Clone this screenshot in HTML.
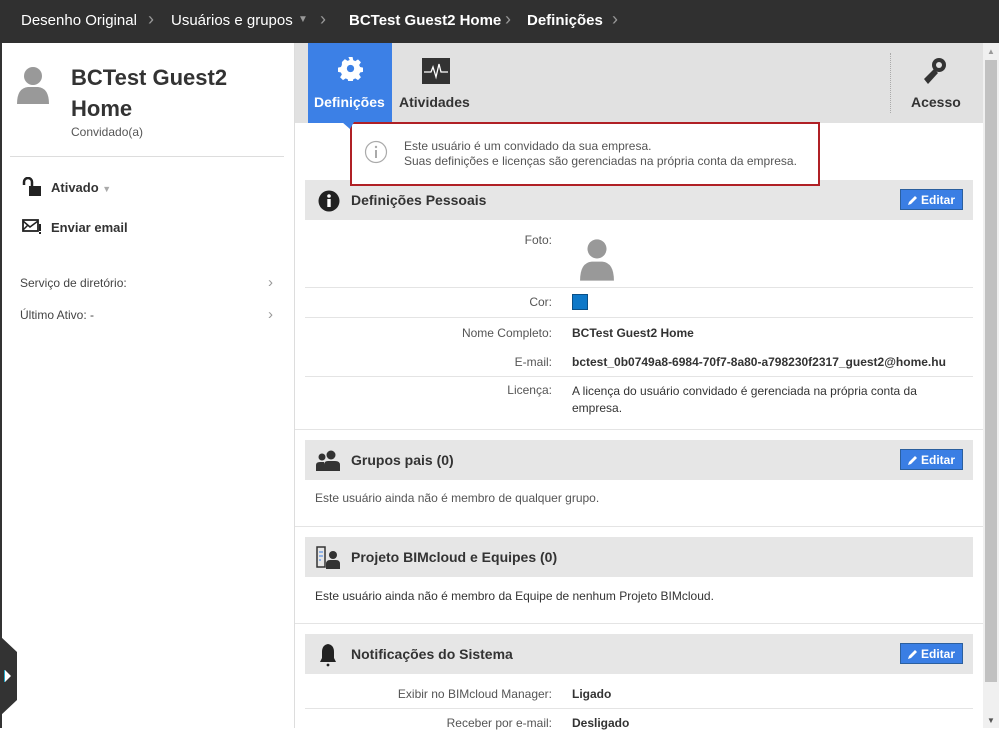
<!DOCTYPE html>
<html><head><meta charset="utf-8"><style>
*{margin:0;padding:0;box-sizing:border-box}
body{width:999px;height:728px;overflow:hidden;background:#fff;font-family:"Liberation Sans","DejaVu Sans",sans-serif;color:#333;position:relative;font-size:12px}
.a{position:absolute;white-space:nowrap}
.top{left:0;top:0;width:999px;height:43px;background:#303030}
.top span{position:absolute;top:12px;color:#fff;font-size:15px}
.sep{color:#999!important;font-size:18px!important;top:9px!important}
.b{font-weight:bold}
.lbl{position:absolute;right:447px;text-align:right;color:#555;font-size:12px}
.val{position:absolute;left:572px;font-size:12px;color:#333}
.hl{position:absolute;left:305px;width:668px;height:1px;background:#e4e4e4}
.sh{position:absolute;left:305px;width:668px;height:40px;background:#e6e6e6}
.sh .t{position:absolute;left:46px;top:12px;font-size:14px;font-weight:bold;color:#333}
.ed{position:absolute;right:10px;top:9px;width:63px;height:21px;background:#3a7ee4;border:1px solid #2b5f9e;color:#fff;font-weight:bold;font-size:12px;padding:3px 0 0 20px}
.ed svg{position:absolute;left:6px;top:5px}
</style></head><body>
<div class="a top">
<span style="left:21px">Desenho Original</span>
<span class="sep" style="left:148px">›</span>
<span style="left:171px">Usuários e grupos</span>
<span style="left:298px;top:14px;font-size:10px;color:#999">▼</span>
<span class="sep" style="left:320px">›</span>
<span class="b" style="left:349px">BCTest Guest2 Home</span>
<span class="sep" style="left:505px">›</span>
<span class="b" style="left:527px">Definições</span>
<span class="sep" style="left:612px">›</span>
</div>
<div class="a" style="left:0;top:43px;width:2px;height:685px;background:#333"></div>
<!-- left panel -->
<svg class="a" style="left:16px;top:66px" width="34" height="40" viewBox="0 0 34 40"><circle cx="17" cy="10" r="9" fill="#999"/><path d="M1 38 Q1 22 12 21 L22 21 Q33 22 33 38 Z" fill="#999"/></svg>
<div class="a b" style="left:71px;top:65px;font-size:22px;color:#333">BCTest Guest2</div>
<div class="a b" style="left:71px;top:96px;font-size:22px;color:#333">Home</div>
<div class="a" style="left:71px;top:125px;font-size:12px;color:#555">Convidado(a)</div>
<div class="a" style="left:10px;top:156px;width:274px;height:1px;background:#ddd"></div>
<svg class="a" style="left:22px;top:177px" width="20" height="20" viewBox="0 0 20 20"><path d="M2 8 V5 a4 4 0 0 1 8 0 V9" stroke="#222" stroke-width="2.5" fill="none"/><rect x="7" y="9" width="12" height="10" fill="#222"/></svg>
<div class="a b" style="left:51px;top:180px;font-size:13px">Ativado <span style="color:#aaa;font-size:9px;font-weight:normal">▼</span></div>
<svg class="a" style="left:22px;top:218px" width="20" height="18" viewBox="0 0 20 18"><rect x="1" y="2" width="15" height="11" fill="none" stroke="#222" stroke-width="1.8"/><path d="M1 3 L8 9 L16 3 M1 12 L6 7" stroke="#222" stroke-width="1.5" fill="none"/><rect x="17" y="6" width="2" height="7" fill="#222"/><rect x="17" y="14" width="2" height="2" fill="#222"/></svg>
<div class="a b" style="left:51px;top:220px;font-size:13px">Enviar email</div>
<div class="a" style="left:20px;top:276px;font-size:12px;color:#444">Serviço de diretório:</div>
<div class="a" style="left:268px;top:274px;color:#999;font-size:15px">›</div>
<div class="a" style="left:20px;top:308px;font-size:12px;color:#444">Último Ativo: -</div>
<div class="a" style="left:268px;top:306px;color:#999;font-size:15px">›</div>
<svg class="a" style="left:0;top:636px" width="18" height="80" viewBox="0 0 18 80"><path d="M0 0 L17 16 L17 64 L0 80 Z" fill="#333"/><path d="M5 34 L11 40 L5 46 Z" fill="#fff"/><path d="M4 34 L5 34 L5 46 L4 46Z" fill="#2ac"/></svg>
<div class="a" style="left:294px;top:43px;width:1px;height:685px;background:#ddd"></div>
<!-- tab bar -->
<div class="a" style="left:295px;top:43px;width:688px;height:80px;background:#e1e1e1"></div>
<div class="a" style="left:308px;top:43px;width:84px;height:80px;background:#3c80e6"></div>
<svg class="a" style="left:338px;top:56px" width="25" height="25" viewBox="0 0 24 24"><path fill="#fff" d="M10 1h4l.6 3 2 .9 2.6-1.7 2.8 2.8-1.7 2.6.9 2 3 .6v4l-3 .6-.9 2 1.7 2.6-2.8 2.8-2.6-1.7-2 .9-.6 3h-4l-.6-3-2-.9-2.6 1.7-2.800-2.8 1.7-2.6-.9-2-3-.6v-4l3-.6.9-2L3.8 5.8l2.8-2.8 2.6 1.7 2-.9z"/><circle cx="12" cy="12" r="3.5" fill="#3c80e6"/></svg>
<div class="a b" style="left:314px;top:94px;font-size:14px;color:#fff">Definições</div>
<svg class="a" style="left:422px;top:58px" width="28" height="26" viewBox="0 0 28 26"><rect width="28" height="26" fill="#333"/><path d="M2 14 H9 L11 9 L14 19 L17 6 L19 14 H26" stroke="#fff" stroke-width="1.3" fill="none"/></svg>
<div class="a b" style="left:399px;top:94px;font-size:14px;color:#333">Atividades</div>
<div class="a" style="left:890px;top:53px;height:60px;border-left:1px dotted #aaa"></div>
<svg class="a" style="left:921px;top:56px" width="28" height="30" viewBox="0 0 28 30"><circle cx="18" cy="9" r="7" fill="#333"/><circle cx="18" cy="9" r="3" fill="#e1e1e1"/><path d="M13 13 L3 23 L7 28 L17 17Z" fill="#333"/></svg>
<div class="a b" style="left:911px;top:94px;font-size:14px;color:#333">Acesso</div>
<!-- personal -->
<div class="sh" style="top:180px"><svg class="a" style="left:13px;top:10px" width="22" height="22" viewBox="0 0 22 22"><circle cx="11" cy="11" r="10.5" fill="#222"/><rect x="9.3" y="9" width="3.4" height="8" fill="#fff"/><circle cx="11" cy="6" r="1.8" fill="#fff"/></svg><div class="t">Definições Pessoais</div><div class="ed"><svg width="11" height="11" viewBox="0 0 11 11"><path d="M1 10 L2 7 L8 1 L10 3 L4 9Z" fill="#fff"/></svg>Editar</div></div>
<!-- notice -->
<div class="a" style="left:350px;top:122px;width:470px;height:64px;border:2px solid #b02025;background:#fff"></div>
<svg class="a" style="left:342px;top:122px" width="12" height="8"><path d="M0 0 L12 0 L8 7Z" fill="#3c80e6"/></svg>
<svg class="a" style="left:364px;top:140px" width="24" height="24" viewBox="0 0 24 24"><circle cx="12" cy="12" r="10.5" fill="none" stroke="#aaa" stroke-width="1.2"/><rect x="11" y="10" width="2" height="8" fill="#aaa"/><circle cx="12" cy="7" r="1.2" fill="#aaa"/></svg>
<div class="a" style="left:404px;top:139px;font-size:12px;color:#555;line-height:15px">Este usuário é um convidado da sua empresa.<br>Suas definições e licenças são gerenciadas na própria conta da empresa.</div>
<div class="lbl" style="top:233px">Foto:</div>
<svg class="a" style="left:579px;top:238px" width="36" height="43" viewBox="0 0 34 40"><circle cx="17" cy="10" r="9" fill="#999"/><path d="M1 40 Q1 23 12 22 L22 22 Q33 23 33 40 Z" fill="#999"/></svg>
<div class="hl" style="top:287px"></div>
<div class="lbl" style="top:295px">Cor:</div>
<div class="a" style="left:572px;top:294px;width:16px;height:16px;background:#0e78c8;border:1px solid #0a4f86"></div>
<div class="hl" style="top:317px"></div>
<div class="lbl" style="top:326px">Nome Completo:</div>
<div class="val b" style="top:326px">BCTest Guest2 Home</div>
<div class="lbl" style="top:355px">E-mail:</div>
<div class="val b" style="top:355px">bctest_0b0749a8-6984-70f7-8a80-a798230f2317_guest2@home.hu</div>
<div class="hl" style="top:376px"></div>
<div class="lbl" style="top:383px">Licença:</div>
<div class="val" style="top:383px;line-height:17px">A licença do usuário convidado é gerenciada na própria conta da<br>empresa.</div>
<div class="hl" style="left:295px;width:688px;top:429px"></div>
<!-- groups -->
<div class="sh" style="top:440px"><svg class="a" style="left:11px;top:10px" width="26" height="22" viewBox="0 0 26 22"><circle cx="6" cy="7" r="3.5" fill="#333"/><path d="M0 21 V15 Q0 12 4 12 H8 V21Z" fill="#333"/><circle cx="15" cy="5" r="4.5" fill="#333"/><path d="M8 21 V15 Q8 11 12 11 H19 Q24 11 24 15 V21Z" fill="#333"/></svg><div class="t">Grupos pais (0)</div><div class="ed"><svg width="11" height="11" viewBox="0 0 11 11"><path d="M1 10 L2 7 L8 1 L10 3 L4 9Z" fill="#fff"/></svg>Editar</div></div>
<div class="a" style="left:315px;top:491px;font-size:12px;color:#555">Este usuário ainda não é membro de qualquer grupo.</div>
<div class="hl" style="left:295px;width:688px;top:526px"></div>
<!-- project -->
<div class="sh" style="top:537px"><svg class="a" style="left:11px;top:9px" width="26" height="24" viewBox="0 0 26 24"><rect x="1" y="1" width="8" height="20" fill="none" stroke="#333" stroke-width="1.5"/><path d="M4 5v2M4 9v2M4 13v2M6 5v2M6 9v2" stroke="#3c80e6" stroke-width="1"/><circle cx="17" cy="9" r="4" fill="#333"/><path d="M10 23 V18 Q10 14 14 14 H20 Q24 14 24 18 V23Z" fill="#333"/></svg><div class="t">Projeto BIMcloud e Equipes (0)</div></div>
<div class="a" style="left:315px;top:589px;font-size:12px;color:#333">Este usuário ainda não é membro da Equipe de nenhum Projeto BIMcloud.</div>
<div class="hl" style="left:295px;width:688px;top:623px"></div>
<!-- notifications -->
<div class="sh" style="top:634px"><svg class="a" style="left:13px;top:9px" width="20" height="24" viewBox="0 0 20 24"><path d="M10 1 Q4 2 4 9 V15 L2 19 H18 L16 15 V9 Q16 2 10 1Z" fill="#222"/><circle cx="10" cy="22" r="1.4" fill="#222"/></svg><div class="t">Notificações do Sistema</div><div class="ed"><svg width="11" height="11" viewBox="0 0 11 11"><path d="M1 10 L2 7 L8 1 L10 3 L4 9Z" fill="#fff"/></svg>Editar</div></div>
<div class="lbl" style="top:687px">Exibir no BIMcloud Manager:</div>
<div class="val b" style="top:687px">Ligado</div>
<div class="hl" style="top:708px"></div>
<div class="lbl" style="top:716px">Receber por e-mail:</div>
<div class="val b" style="top:716px">Desligado</div>
<!-- scrollbar -->
<div class="a" style="left:983px;top:43px;width:16px;height:685px;background:#f0f0f0"></div>
<div class="a" style="left:987px;top:47px;color:#999;font-size:8px">▲</div>
<div class="a" style="left:985px;top:60px;width:12px;height:622px;background:#c1c1c1"></div>
<div class="a" style="left:987px;top:716px;color:#555;font-size:8px">▼</div>
</body></html>
